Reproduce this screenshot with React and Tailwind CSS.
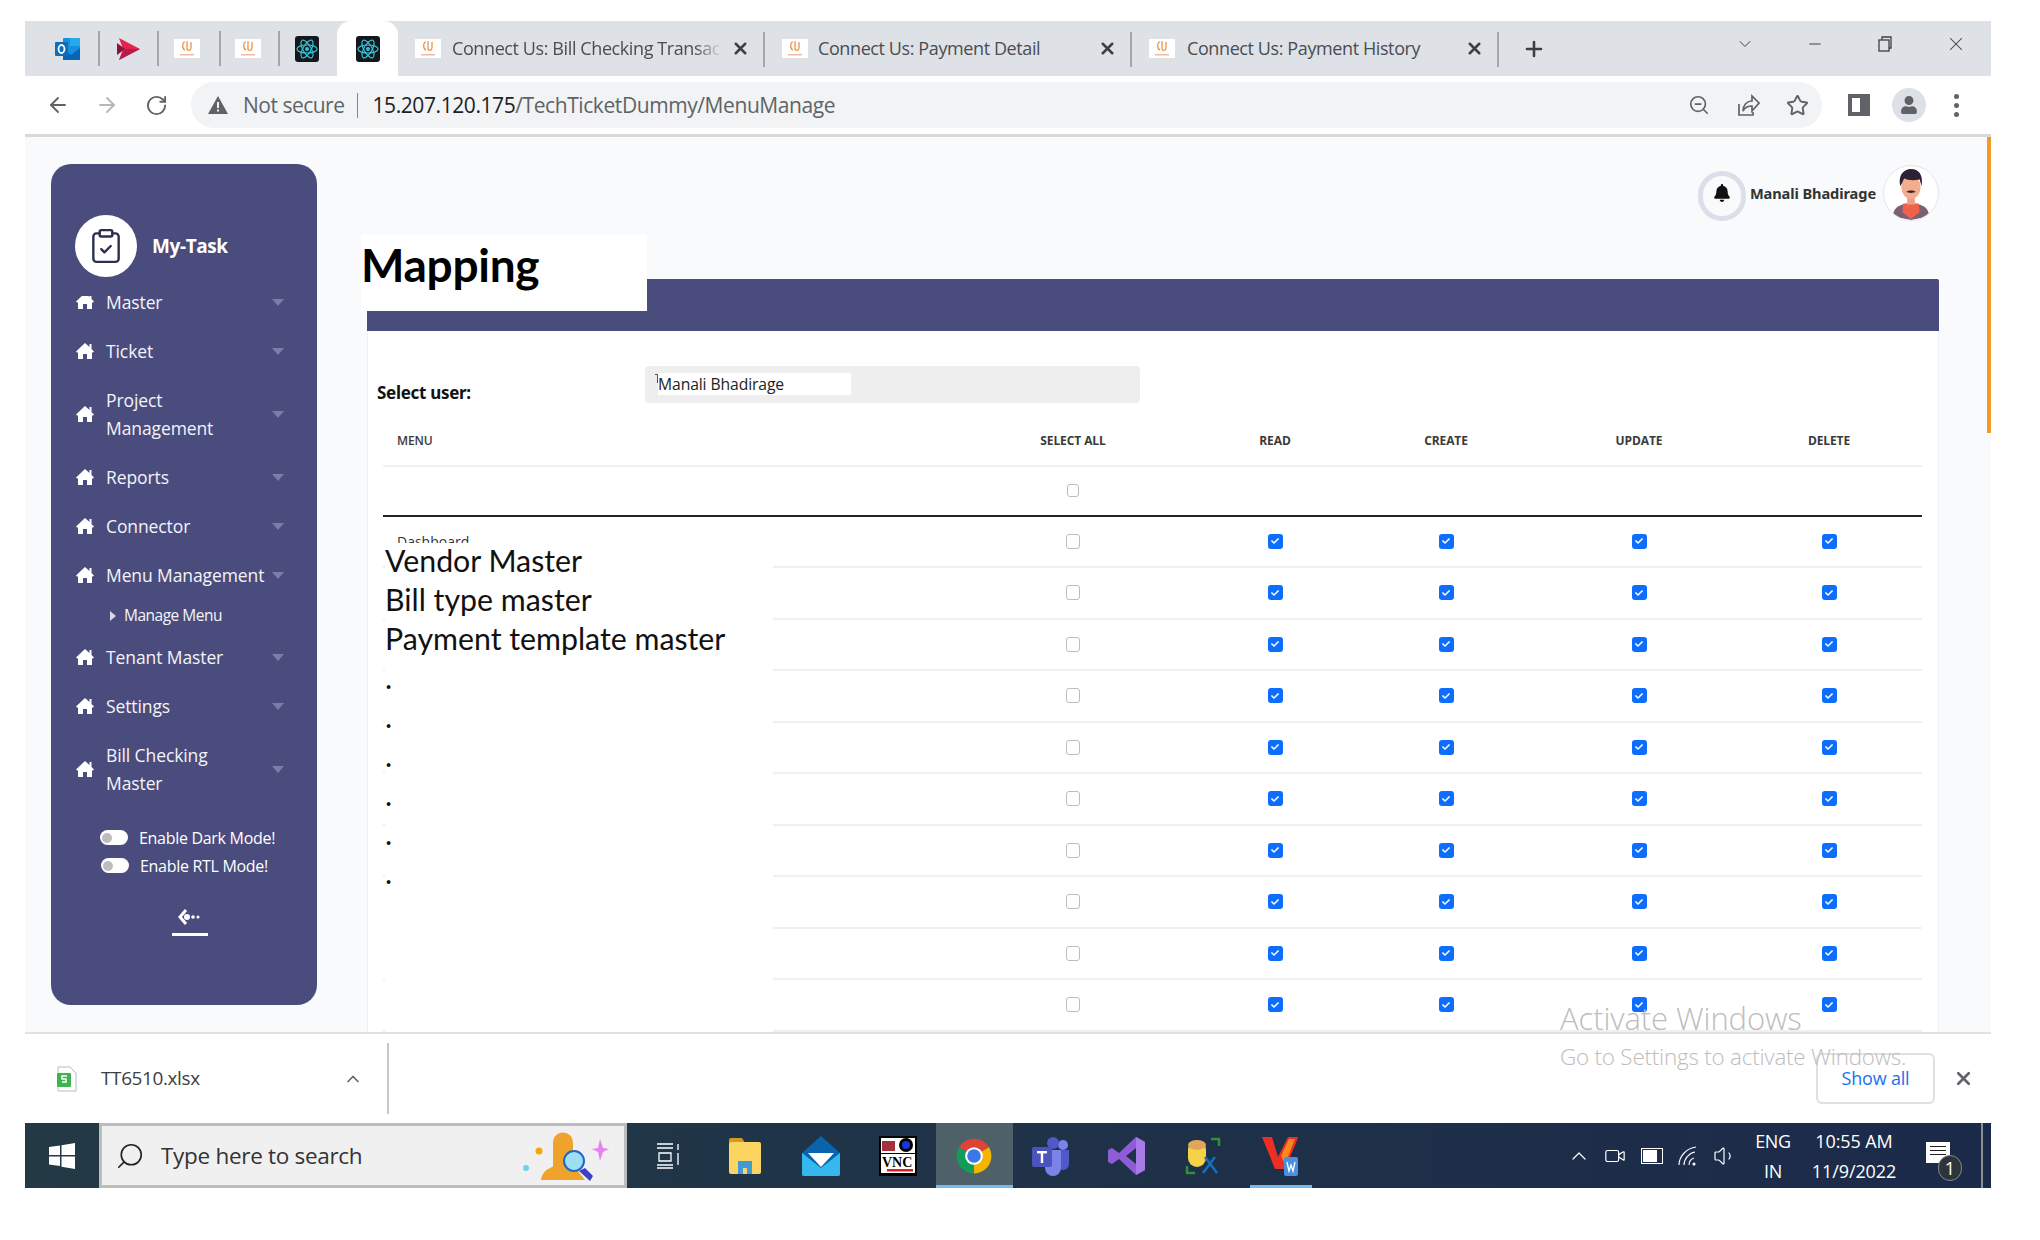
import { ArrowLeft, ArrowRight, RotateCw, ZoomOut, Star, X, Plus, Minus, ChevronDown, ChevronUp, Search, ClipboardCheck, Video, Volume1 } from "lucide-react"
import { FaBell, FaUser, FaCheck } from "react-icons/fa"

const CuIcon = () => (
  <svg width="26" height="19" viewBox="0 0 26 19" className="shrink-0">
    <rect width="26" height="19" fill="#fff" />
    <path d="M11 3c-3 0-3 7 0 8M13 2v8c0 2 4 2 4-1V3" fill="none" stroke="#ea8a3c" strokeWidth="1.2" />
    <rect x="6" y="15" width="14" height="1.5" fill="#f3b9a0" />
  </svg>
)

const ReactIcon = () => (
  <svg width="26" height="26" viewBox="0 0 26 26" className="shrink-0">
    <rect x="1" width="24" height="26" rx="3" fill="#14181c" />
    <g fill="none" stroke="#35c4d8" strokeWidth="1.2">
      <ellipse cx="13" cy="13" rx="10" ry="4" />
      <ellipse cx="13" cy="13" rx="10" ry="4" transform="rotate(60 13 13)" />
      <ellipse cx="13" cy="13" rx="10" ry="4" transform="rotate(120 13 13)" />
    </g>
    <circle cx="13" cy="13" r="2" fill="#35c4d8" />
  </svg>
)

const OutlookIcon = () => (
  <svg width="26" height="24" viewBox="0 0 26 24" className="shrink-0">
    <rect x="8" y="1" width="17" height="22" rx="1" fill="#1490df" />
    <rect x="15" y="1" width="10" height="8" fill="#28a8ea" />
    <path d="M8 12l8 6 9-7v12H8z" fill="#0a64b4" />
    <rect y="5" width="13" height="14" rx="1" fill="#0f6cbd" />
    <ellipse cx="6.5" cy="12" rx="3" ry="4" fill="none" stroke="#fff" strokeWidth="1.8" />
  </svg>
)

const PinkIcon = () => (
  <svg width="23" height="24" viewBox="0 0 23 24" className="shrink-0">
    <path d="M2 1l21 11L2 23l4-11z" fill="#e5234f" />
    <path d="M0 6l8 6-8 6z" fill="#8e1240" />
    <path d="M8 12h15L2 23z" fill="#b81a4c" />
  </svg>
)

const HomeIcon = () => (
  <svg width="18" height="16" viewBox="0 0 18 16" fill="#fff" className="shrink-0">
    <path d="M9 0l4.5 4V1h2v5l2.5 2.5-1 1H16V16h-5v-5H7v5H2V9.5H1l-1-1z" />
  </svg>
)

const ShareIcon = () => (
  <svg width="24" height="24" viewBox="0 0 24 24" fill="none" stroke="#5f6368" strokeWidth="1.7" className="mr-[26px]">
    <path d="M3 11v11h14v-3" />
    <path d="M7 18c0-6 4-10 9-10V3l7 7-7 8v-5c-4 0-7 1-9 5z" />
  </svg>
)

const Sep = ({ className = "" }) => <div className={`w-[2px] h-[35px] bg-[#a3a6ab] shrink-0 ${className}`} />

const Tab = ({ title, textLeft, fade }) => (
  <div className="relative w-[367px] h-full flex items-center shrink-0">
    <div className="ml-[17px]"><CuIcon /></div>
    <span className={`text-[18px] text-[#4a4d52] tracking-[-0.4px] whitespace-nowrap overflow-hidden w-[270px] ${textLeft} ${fade ? "[mask-image:linear-gradient(to_right,black_90%,transparent)]" : ""}`}>{title}</span>
    <X size={19} strokeWidth={3.2} className="absolute left-[333px] top-[18px] text-[#3c4043]" />
    <Sep className="absolute left-[365px] top-[11px]" />
  </div>
)

const TabStrip = () => (
  <div className="h-[55px] bg-[#dee1e6] flex items-center shrink-0">
    <div className="ml-[30px]"><OutlookIcon /></div>
    <Sep className="ml-[17px]" />
    <div className="ml-[17px]"><PinkIcon /></div>
    <Sep className="ml-[17px]" />
    <div className="ml-[15px]"><CuIcon /></div>
    <Sep className="ml-[19px]" />
    <div className="ml-[14px]"><CuIcon /></div>
    <Sep className="ml-[17px]" />
    <div className="ml-[14px]"><ReactIcon /></div>
    <div className="ml-[17px] w-[61px] h-full bg-white rounded-t-[14px] flex items-center justify-center shrink-0"><ReactIcon /></div>
    <Tab title="Connect Us: Bill Checking Transaction" textLeft="ml-[11px]" fade />
    <Tab title="Connect Us: Payment Detail" textLeft="ml-[10px]" />
    <Tab title="Connect Us: Payment History" textLeft="ml-[12px]" />
    <Plus size={24} strokeWidth={2.6} className="ml-[23px] text-[#3c4043] shrink-0" />
    <div className="ml-auto flex items-center h-full pb-[10px] text-[#3c4043]">
      <ChevronDown size={20} strokeWidth={1.2} className="mr-[51px]" />
      <Minus size={18} strokeWidth={1.4} className="mr-[53px]" />
      <svg width="16" height="16" viewBox="0 0 16 16" className="mr-[52px]" fill="none" stroke="#3c4043" strokeWidth="1.3">
        <rect x="2" y="4" width="10" height="11" />
        <path d="M5 4V1h9v11h-2" />
      </svg>
      <X size={22} strokeWidth={1.1} className="mr-[24px]" />
    </div>
  </div>
)

const Toolbar = () => (
  <div className="h-[58px] bg-white flex items-center shrink-0">
    <ArrowLeft size={24} strokeWidth={1.8} className="ml-[21px] text-[#5f6368]" />
    <ArrowRight size={24} strokeWidth={1.8} className="ml-[25px] text-[#b4b7bb]" />
    <RotateCw size={23} strokeWidth={2} className="ml-[26px] text-[#5f6368]" />
    <div className="ml-[23px] w-[1631px] h-[46px] bg-[#f1f3f4] rounded-full flex items-center">
      <svg width="20" height="18" viewBox="0 0 20 18" className="ml-[17px] shrink-0">
        <path d="M10 0l10 18H0z" fill="#5f6368" />
        <rect x="9" y="6" width="2" height="6" fill="#f1f3f4" />
        <rect x="9" y="13.5" width="2" height="2" fill="#f1f3f4" />
      </svg>
      <span className="ml-[15px] mt-[2px] text-[21px] text-[#5f6368] tracking-[-0.5px] whitespace-nowrap">Not secure</span>
      <div className="ml-[12px] w-[1px] h-[25px] bg-[#80868b]" />
      <span className="ml-[15px] mt-[2px] text-[21px] text-[#5f6368] tracking-[-0.42px] whitespace-nowrap"><span className="text-[#202124]">15.207.120.175</span>/TechTicketDummy/MenuManage</span>
      <div className="ml-auto flex items-center text-[#5f6368]">
        <ZoomOut size={22} strokeWidth={1.8} className="mr-[26px]" />
        <ShareIcon />
        <Star size={23} strokeWidth={2} className="mr-[13px]" />
      </div>
    </div>
    <div className="ml-[26px] w-[22px] h-[22px] border-[4px] border-[#5f6368] border-r-[10px] shrink-0" />
    <div className="ml-[22px] w-[34px] h-[34px] rounded-full bg-[#dde0e6] flex items-center justify-center shrink-0"><FaUser size={18} className="text-[#5f6368]" /></div>
    <div className="ml-[28px] flex flex-col gap-[4px] shrink-0">
      <div className="w-[5px] h-[5px] rounded-full bg-[#5f6368]" />
      <div className="w-[5px] h-[5px] rounded-full bg-[#5f6368]" />
      <div className="w-[5px] h-[5px] rounded-full bg-[#5f6368]" />
    </div>
  </div>
)

const Caret = () => <div className="w-0 h-0 border-x-[6px] border-x-transparent border-t-[7px] border-t-[#7b7da6] shrink-0" />

const NavItem = ({ lines, clip }) => (
  <div className="flex items-center pl-[25px] pr-[33px] py-[10.5px] text-[17.5px] leading-[28px] text-[#f4f4f8] tracking-[-0.1px]">
    <div className={`w-[18px] shrink-0 flex items-end ${clip ? "h-[13px] overflow-hidden" : ""}`}><HomeIcon /></div>
    <div className="ml-[12px] flex-1 whitespace-nowrap">
      {lines.map((l) => <div key={l}>{l}</div>)}
    </div>
    <Caret />
  </div>
)

const Toggle = ({ label, className = "" }) => (
  <div className={`flex items-center h-[28px] ${className}`}>
    <div className="w-[28px] h-[15px] rounded-full bg-white flex items-center pl-[2px] shrink-0">
      <div className="w-[10px] h-[10px] rounded-full bg-[#bdbdbd]" />
    </div>
    <span className="ml-[11px] text-[16px] tracking-[-0.3px] text-white whitespace-nowrap">{label}</span>
  </div>
)

const Sidebar = () => (
  <div className="ml-[26px] mt-[27px] w-[266px] h-[841px] bg-[#4a4c7d] rounded-[20px] shrink-0">
    <div className="flex items-center pl-[24px] pt-[51px] h-[113.5px]">
      <div className="w-[62px] h-[62px] rounded-full bg-white flex items-center justify-center shrink-0">
        <ClipboardCheck size={38} strokeWidth={1.5} className="text-[#2b2f4e]" />
      </div>
      <span className="ml-[15px] text-[19px] font-bold tracking-[-0.4px] text-white">My-Task</span>
    </div>
    <NavItem lines={["Master"]} clip />
    <NavItem lines={["Ticket"]} />
    <NavItem lines={["Project", "Management"]} />
    <NavItem lines={["Reports"]} />
    <NavItem lines={["Connector"]} />
    <NavItem lines={["Menu Management"]} />
    <div className="h-[33px] flex items-center pl-[59px] text-[15.5px] tracking-[-0.5px] text-[#f4f4f8]">
      <div className="w-0 h-0 border-y-[5px] border-y-transparent border-l-[6px] border-l-[#d8d8e6]" />
      <span className="ml-[8px]">Manage Menu</span>
    </div>
    <NavItem lines={["Tenant Master"]} />
    <NavItem lines={["Settings"]} />
    <NavItem lines={["Bill Checking", "Master"]} />
    <div className="pl-[49px] mt-[16px]">
      <Toggle label="Enable Dark Mode!" />
      <Toggle label="Enable RTL Mode!" className="ml-[1px]" />
    </div>
    <div className="mt-[29px] pl-[12px] flex flex-col items-center">
      <svg width="24" height="16" viewBox="0 0 24 16">
        <path d="M8 1L2 8l6 7" fill="none" stroke="#fff" strokeWidth="3" />
        <circle cx="9" cy="8" r="3" fill="#fff" />
        <circle cx="15" cy="8" r="1.8" fill="#fff" />
        <circle cx="20" cy="8" r="1.5" fill="#fff" />
      </svg>
      <div className="mt-[8px] w-[36px] h-[3px] bg-white" />
    </div>
  </div>
)

const Avatar = () => (
  <div className="ml-[7px] w-[56px] h-[56px] rounded-full bg-white border border-[#e3e5ea] overflow-hidden shrink-0">
    <svg viewBox="0 0 56 56" className="w-full h-full">
      <path d="M9 52c1-10 9-13 19-13s18 3 19 13l-19 4z" fill="#7c5f72" />
      <path d="M20 39h16l1 9-9 7-9-7z" fill="#f0614c" />
      <rect x="24" y="30" width="8" height="10" fill="#eda084" />
      <ellipse cx="28" cy="22" rx="10" ry="12" fill="#f3ae90" />
      <path d="M17 21c-3-13 5-18 11-18 8 0 13 6 11 18l-2-7c-6 1-12 1-16-1z" fill="#2e2035" />
      <path d="M23 27c3-2 7-2 10 0l-5 1z" fill="#2e2035" />
    </svg>
  </div>
)

const TopUser = () => (
  <div className="h-[142px] flex justify-end items-start pt-[28px] shrink-0">
    <div className="mt-[6px] w-[48px] h-[50px] rounded-full border-[5px] border-[#dcdeea] flex items-center justify-center"><FaBell size={18} className="text-[#111] mb-[6px]" /></div>
    <span className="ml-[4px] mt-[18px] text-[14.6px] font-bold tracking-[-0.1px] text-[#333] whitespace-nowrap font-['Noto_Sans',sans-serif]">Manali Bhadirage</span>
    <Avatar />
  </div>
)

const Check = ({ on, small }) => (
  on ? (
    <div className="w-[15px] h-[15px] rounded-[3px] bg-[#0d6efd] flex items-center justify-center"><FaCheck size={8} className="text-white" /></div>
  ) : (
    <div className={`${small ? "w-[12px] h-[13px]" : "w-[14px] h-[15px]"} rounded-[3px] bg-white border border-[#bdbdbd]`} />
  )
)

const cols = "grid grid-cols-[563px_254px_150px_192px_194px_186px] items-center justify-items-center"

const Row = ({ name }) => (
  <div className={`${cols} h-[51.5px] border-b-2 border-[#f0f0f0] box-border`}>
    <span className="justify-self-start pl-[14px] text-[14px] text-[#333]">{name}</span>
    <Check />
    <Check on />
    <Check on />
    <Check on />
    <Check on />
  </div>
)

const headers = ["SELECT ALL", "READ", "CREATE", "UPDATE", "DELETE"]
const rows = ["Dashboard", "", "", "", "", "", "", "", "", "", ""]
const pasted = ["Vendor Master", "Bill type master", "Payment template master", ".", ".", ".", ".", ".", "."]

const Card = () => (
  <div className="relative flex-1 shrink-0 bg-white border-x border-[#eef0f4]">
    <div className="h-[52px] bg-[#4a4c7d] -mx-px rounded-t-[2px]" />
    <div className="flex items-start pl-[9px] pt-[35px]">
      <span className="w-[268px] mt-[14px] text-[17px] font-bold tracking-[-0.3px] text-[#111] font-['Noto_Sans',sans-serif]">Select user:</span>
      <div className="w-[495px] h-[37px] bg-[#eeeeee] rounded-[4px] pl-[13px] pt-[7px] relative">
        <div className="w-[193px] h-[22px] bg-white text-[15.7px] leading-[22px] text-[#222] tracking-[-0.1px] whitespace-nowrap">Manali Bhadirage</div>
        <div className="absolute left-[10px] top-[8px] w-[3px] h-[9px] border-t border-r border-[#555]" />
      </div>
    </div>
    <div className="ml-[15px] mt-[11px] w-[1539px]">
      <div className={`${cols} h-[50px] pt-[1px] border-b-2 border-[#f0f0f0] text-[12px] font-semibold tracking-[-0.1px] text-[#3a3a3a]`}>
        <span className="justify-self-start pl-[14px]">MENU</span>
        {headers.map((h) => <span key={h} className="font-bold">{h}</span>)}
      </div>
      <div className={`${cols} h-[50px] border-b-2 border-[#212529]`}>
        <span />
        <Check small />
      </div>
      {rows.map((name, i) => <Row key={i} name={name} />)}
    </div>
    {/* pasted over the table */}
    <div className="absolute left-[17px] top-[264px] bottom-0 w-[388px] bg-white text-[30.3px] leading-[39px] text-[#111] font-['Lato',sans-serif]">
      <div className="-mt-[2px]">
        {pasted.map((p, i) => <div key={i} className="whitespace-nowrap">{p}</div>)}
      </div>
    </div>
  </div>
)

const Main = () => (
  <div className="relative ml-[50px] w-[1572px] flex flex-col shrink-0">
    <TopUser />
    <Card />
    <div className="absolute -left-[6px] top-[98px] w-[286px] h-[76px] bg-white text-[46px] leading-[60px] font-bold tracking-[-0.3px] text-black font-['Lato',sans-serif]">Mapping</div>
  </div>
)

const Downloads = () => (
  <div className="relative h-[91px] bg-white border-t-2 border-[#e1e1e1] flex items-center shrink-0">
    <svg width="20" height="26" viewBox="0 0 20 26" className="ml-[32px]">
      <path d="M1 1h12l6 6v18H1z" fill="#fff" stroke="#bbb" />
      <rect x="0" y="7" width="14" height="14" rx="1" fill="#3fb34f" />
      <path d="M10 10H5v3h4v3H5" fill="none" stroke="#fff" strokeWidth="1.5" />
    </svg>
    <span className="ml-[24px] text-[19px] tracking-[-0.4px] text-[#3c4043]">TT6510.xlsx</span>
    <ChevronUp size={20} strokeWidth={2} className="ml-[143px] text-[#5f6368]" />
    <div className="ml-[24px] w-[2px] h-[71px] bg-[#c8c8c8]" />
    <div className="ml-auto mr-[56px] w-[119px] h-[51px] rounded-[6px] border-2 border-[#e0e0e0] flex items-center justify-center text-[18px] tracking-[-0.2px] text-[#1a73e8]">Show all</div>
    <X size={21} strokeWidth={3} className="absolute left-[1928px] top-[34px] text-[#5f6368]" />
  </div>
)

const Chrome = () => (
  <svg width="38" height="38" viewBox="0 0 24 24">
    <path d="M12 12L2.5 6.5A11 11 0 0 1 21.5 6.5Z" fill="#db4437" />
    <path d="M12 12L21.5 6.5A11 11 0 0 1 12 23Z" fill="#f4b400" />
    <path d="M12 12L12 23A11 11 0 0 1 2.5 6.5Z" fill="#0f9d58" />
    <circle cx="12" cy="12" r="5.6" fill="#fff" />
    <circle cx="12" cy="12" r="4.3" fill="#3b78e7" />
  </svg>
)

const taskIcons = [
  <svg key="tv" width="24" height="26" viewBox="0 0 24 26" fill="none" stroke="#fff" strokeWidth="1.3">
    <path d="M1 1h16M1 5h16M3 10h12v8H3zM1 22h16M1 25h16M22 1v6M22 10v12" />
  </svg>,
  <svg key="folder" width="34" height="38" viewBox="0 0 34 38">
    <path d="M1 3a2 2 0 0 1 2-2h11l3 5h-16z" fill="#d29d1f" />
    <rect x="1" y="5" width="32" height="32" rx="2" fill="#fcd462" />
    <path d="M10 37V24h14v13h-5v-6h-4v6z" fill="#3f9ad8" />
  </svg>,
  <svg key="mail" width="38" height="40" viewBox="0 0 38 40">
    <path d="M19 0l19 17v23H0V17z" fill="#0a64ad" />
    <path d="M6 17h26L19 31z" fill="#fff" />
    <path d="M0 17l19 15 19-15v21a2 2 0 0 1-2 2H2a2 2 0 0 1-2-2z" fill="#35b8ee" />
  </svg>,
  <svg key="vnc" width="38" height="40" viewBox="0 0 38 40">
    <rect width="38" height="40" fill="#000" />
    <rect x="2" y="2" width="34" height="15" fill="#fff" />
    <rect x="3" y="5" width="13" height="10" fill="#a3323a" />
    <circle cx="27" cy="9" r="7" fill="#000" />
    <circle cx="27" cy="9" r="4" fill="#1c35e0" />
    <rect x="2" y="18" width="34" height="19" fill="#fff" />
    <text x="3" y="31" fontSize="14" fontWeight="700" fontFamily="Liberation Serif, serif" fill="#000">VNC</text>
    <rect x="8" y="33" width="26" height="2.5" fill="#d22" />
  </svg>,
  <Chrome key="chrome" />,
  <svg key="teams" width="38" height="40" viewBox="0 0 38 40">
    <circle cx="31" cy="9" r="5" fill="#7b83eb" />
    <circle cx="21" cy="7" r="6" fill="#5059c9" />
    <path d="M24 14h13v14a6 6 0 0 1-6 6h-2z" fill="#5059c9" />
    <path d="M10 14h19v18a8 8 0 0 1-16 0z" fill="#7b83eb" />
    <rect y="11" width="20" height="20" rx="2" fill="#4b53bc" />
    <rect x="5" y="15" width="10" height="2.4" fill="#fff" />
    <rect x="8.8" y="15" width="2.4" height="12" fill="#fff" />
  </svg>,
  <svg key="vs" width="38" height="40" viewBox="0 0 38 40">
    <path d="M28 1l9 5v28l-9 5-17-16-7 5-4-2V14l4-2 7 5zM28 12L18 20l10 8z" fill="#8d5cd6" />
    <path d="M28 1l9 5v28l-9 5z" fill="#a97be8" />
  </svg>,
  <svg key="db" width="38" height="40" viewBox="0 0 38 40">
    <path d="M26 3h8v7M2 30v7h8" fill="none" stroke="#2f8f3a" strokeWidth="2.5" />
    <rect x="3" y="5" width="18" height="26" rx="9" fill="#f6d247" />
    <ellipse cx="12" cy="9" rx="9" ry="5" fill="#e2a65a" />
    <path d="M18 37l12-16M32 37L20 21" stroke="#1470b8" strokeWidth="2.6" />
  </svg>,
  <svg key="wps" width="38" height="40" viewBox="0 0 38 40">
    <path d="M1 1h10l6 20L27 1h10l-2 6-11 26H14z" fill="#ee2d24" />
    <path d="M20 20L28 3h6L24 28z" fill="#f78a1d" />
    <rect x="23" y="21" width="14" height="19" rx="2" fill="#4a90e2" />
    <path d="M26 26l2 9 2-6 2 6 2-9" fill="none" stroke="#fff" strokeWidth="1.3" />
  </svg>,
]

const Taskbar = () => (
  <div className="h-[65px] bg-gradient-to-r from-[#233a45] to-[#1c2a4a] flex items-center shrink-0">
    <div className="w-[74px] flex justify-center shrink-0">
      <svg width="26" height="26" viewBox="0 0 26 26" fill="#fff">
        <path d="M0 4l11-1.5V12H0zM12.5 2.3L26 0v12H12.5zM0 13.5h11V23L0 21.5zM12.5 13.5H26V26l-13.5-2.2z" />
      </svg>
    </div>
    <div className="w-[528px] h-full bg-[#f0f0f0] border-[3px] border-[#bcbcbc] flex items-center shrink-0 relative">
      <Search size={30} strokeWidth={1.3} className="ml-[13px] -scale-x-100 text-[#222]" />
      <span className="ml-[16px] text-[22.5px] tracking-[-0.3px] text-[#333]">Type here to search</span>
      <svg width="90" height="50" viewBox="0 0 90 50" className="absolute left-[421px] top-[5px]">
        <circle cx="16" cy="20" r="3.5" fill="#f6a800" />
        <circle cx="3" cy="37" r="3" fill="#6fd3e8" />
        <path d="M18 49c2-12 12-12 12-14V12c0-14 20-14 20 0v22l12 15z" fill="#efa32c" />
        <circle cx="51" cy="30" r="10" fill="#9ee0f2" stroke="#2167c9" strokeWidth="2" />
        <path d="M56 40l6-3 8 8-3 5z" fill="#3b3fc4" />
        <path d="M77 8l3 9 6 1-6 3-3 9-2-9-6-3 6-1z" fill="#e583f0" />
      </svg>
    </div>
    <div className="ml-[3px] flex items-stretch h-full">
      {taskIcons.map((icon, i) => (
        <div key={i} className={`relative w-[76.5px] flex items-center justify-center shrink-0 ${i === 4 ? "bg-[#4e6068]" : ""}`}>
          {icon}
          {i === 4 && <div className="absolute bottom-0 inset-x-0 h-[3px] bg-[#76b9ed]" />}
          {i === 8 && <div className="absolute bottom-0 left-[8px] w-[62px] h-[3px] bg-[#76b9ed]" />}
        </div>
      ))}
    </div>
    <div className="ml-auto flex items-center h-full text-white">
      <div className="w-[36.5px] flex justify-center"><ChevronUp size={24} strokeWidth={1.2} /></div>
      <div className="w-[36.5px] flex justify-center"><Video size={22} strokeWidth={1.3} /></div>
      <div className="w-[36.5px] flex justify-center"><div className="w-[22px] h-[16px] border-[1.5px] border-white p-[1px] pr-[5px]"><div className="w-full h-full bg-white" /></div></div>
      <div className="w-[36.5px] flex justify-center">
        <svg width="22" height="22" viewBox="0 0 22 22" fill="none" stroke="#fff" strokeWidth="1.1">
          <path d="M2 20C2 11 10 3 19 2M7 20c0-6 5-12 11-13M12 20c0-3 2-6 5-7" />
          <circle cx="17" cy="19" r="1" fill="#fff" />
        </svg>
      </div>
      <div className="w-[36.5px] flex justify-center"><Volume1 size={24} strokeWidth={1.2} /></div>
      <div className="w-[60px] h-full flex flex-col justify-center items-center gap-[8px] text-[18px] leading-[22px] tracking-[-0.4px]">
        <span>ENG</span>
        <span>IN</span>
      </div>
      <div className="w-[102px] h-full flex flex-col justify-center items-center gap-[8px] text-[18px] leading-[22px] tracking-[-0.1px]">
        <span>10:55 AM</span>
        <span>11/9/2022</span>
      </div>
      <div className="relative w-[76px] h-full">
        <div className="absolute left-[21px] top-[19px] w-[24px] h-[21px] bg-white flex flex-col gap-[3px] px-[4px] py-[4px]">
          <div className="h-[1px] bg-[#222]" />
          <div className="h-[1px] bg-[#222]" />
          <div className="h-[1px] bg-[#222]" />
        </div>
        <div className="absolute left-[33px] top-[32px] w-[24px] h-[26px] rounded-full bg-[#2e343a] border border-[#888] flex items-center justify-center text-[18px] text-white">1</div>
      </div>
      <div className="w-[2px] h-full bg-[#8b8f94]" />
      <div className="w-[8px]" />
    </div>
  </div>
)

export default function App() {
  return (
    <div className="w-[2040px] h-[1240px] bg-white pt-[21px] pl-[25px] overflow-hidden font-['Open_Sans',sans-serif]">
      <div className="relative w-[1966px] flex flex-col">
        <TabStrip />
        <Toolbar />
        <div className="h-[3px] bg-[#d8d9db] shrink-0" />
        <div className="relative h-[895px] bg-[#f9fafc] flex items-stretch overflow-hidden shrink-0">
          <div className="self-start flex">
            <Sidebar />
          </div>
          <Main />
          <div className="absolute right-0 top-0 w-[4px] h-[296px] bg-[#f39a2b]" />
        </div>
        <Downloads />
        <Taskbar />
        {/* windows watermark */}
        <div className="absolute left-[1535px] top-[975px] text-[#bdbdbd] pointer-events-none">
          <div className="text-[31px] leading-[44px] font-light tracking-[-0.1px] whitespace-nowrap">Activate Windows</div>
          <div className="mt-[2px] text-[22.4px] leading-[30px] font-light tracking-[-0.2px] whitespace-nowrap">Go to Settings to activate Windows.</div>
        </div>
      </div>
    </div>
  )
}
